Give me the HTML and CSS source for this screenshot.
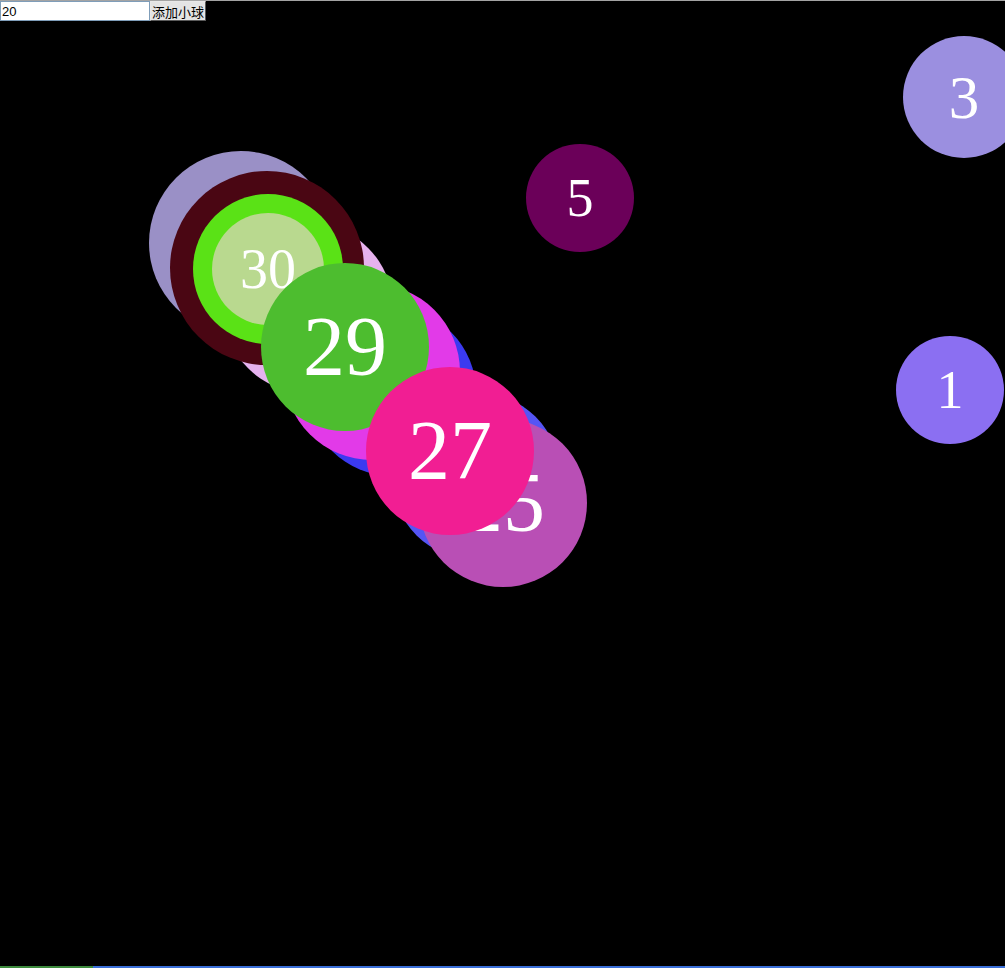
FILE: index.html
```html
<!DOCTYPE html>
<html lang="zh">
<head>
<meta charset="utf-8">
<title>小球</title>
<link rel="stylesheet" href="styles.css">
</head>
<body>
<div class="page">
  <div class="toolbar">
    <input class="count" type="text" value="20" autofocus>
    <button class="add" type="button">添加小球</button>
  </div>
  <div class="stage">
    <div class="ball" style="left:149px;top:130px;width:184px;height:184px;font-size:92px;background:#9a90c6"></div>
    <div class="ball" style="left:223px;top:202px;width:170px;height:170px;font-size:85px;background:#e6b2ee"></div>
    <div class="ball" style="left:170px;top:150px;width:194px;height:194px;font-size:97px;background:#4a0613"></div>
    <div class="ball" style="left:193px;top:173px;width:150px;height:150px;font-size:75px;background:#5ae216"></div>
    <div class="ball" style="left:212px;top:192px;width:112px;height:112px;font-size:56px;background:#b9d98f">30</div>
    <div class="ball" style="left:308px;top:287px;width:168px;height:168px;font-size:84px;background:#3b3af0"></div>
    <div class="ball" style="left:284px;top:263px;width:176px;height:176px;font-size:88px;background:#e23ae8"></div>
    <div class="ball" style="left:261px;top:242px;width:168px;height:168px;font-size:84px;background:#4dbd2f">29</div>
    <div class="ball" style="left:392px;top:371px;width:168px;height:168px;font-size:84px;background:#5555f4"></div>
    <div class="ball" style="left:419px;top:398px;width:168px;height:168px;font-size:84px;background:#b94fb5">25</div>
    <div class="ball" style="left:366px;top:346px;width:168px;height:168px;font-size:84px;background:#f11e93">27</div>
    <div class="ball" style="left:526px;top:123px;width:108px;height:108px;font-size:54px;background:#6b0059">5</div>
    <div class="ball" style="left:903px;top:15px;width:122px;height:122px;font-size:61px;background:#9b8fe0">3</div>
    <div class="ball" style="left:896px;top:315px;width:108px;height:108px;font-size:54px;background:#8b6ff2">1</div>
  </div>
  <div class="taskbar">
    <div class="taskbar-start"></div>
    <div class="taskbar-rest"></div>
  </div>
</div>
</body>
</html>
```
FILE: styles.css
```css
html, body {
  margin: 0;
  padding: 0;
  background: #000;
  overflow: hidden;
}

.page {
  width: 1005px;
  height: 968px;
  display: flex;
  flex-direction: column;
  border-top: 1px solid #a3a3a3;
  box-sizing: border-box;
  overflow: hidden;
}

.toolbar {
  display: flex;
  height: 20px;
  flex: none;
}

.count {
  box-sizing: border-box;
  width: 150px;
  height: 20px;
  margin: 0;
  padding: 0 1px;
  border: 1px solid #7f9db9;
  background: #fff;
  color: #000;
  font: 13px "Liberation Sans", Arial, sans-serif;
  outline: none;
}

.add {
  box-sizing: border-box;
  width: 56px;
  height: 20px;
  margin: 0;
  padding: 0;
  border: 1px solid #5a5a5a;
  border-top-color: #e8e8e8;
  border-left-color: #e8e8e8;
  background: #e4e4e4;
  color: #000;
  font: 13px "Noto Sans CJK SC", sans-serif;
  line-height: 17px;
}

.stage {
  position: relative;
  flex: 1;
  overflow: hidden;
}

.ball {
  position: absolute;
  border-radius: 50%;
  display: flex;
  align-items: center;
  justify-content: center;
  color: #fff;
  font-family: "Liberation Serif", "Times New Roman", serif;
  line-height: 1;
}

.taskbar {
  flex: none;
  height: 2px;
  display: flex;
}

.taskbar-start {
  width: 93px;
  background: #3d8b3d;
}

.taskbar-rest {
  flex: 1;
  background: #3a6fd8;
}
```
